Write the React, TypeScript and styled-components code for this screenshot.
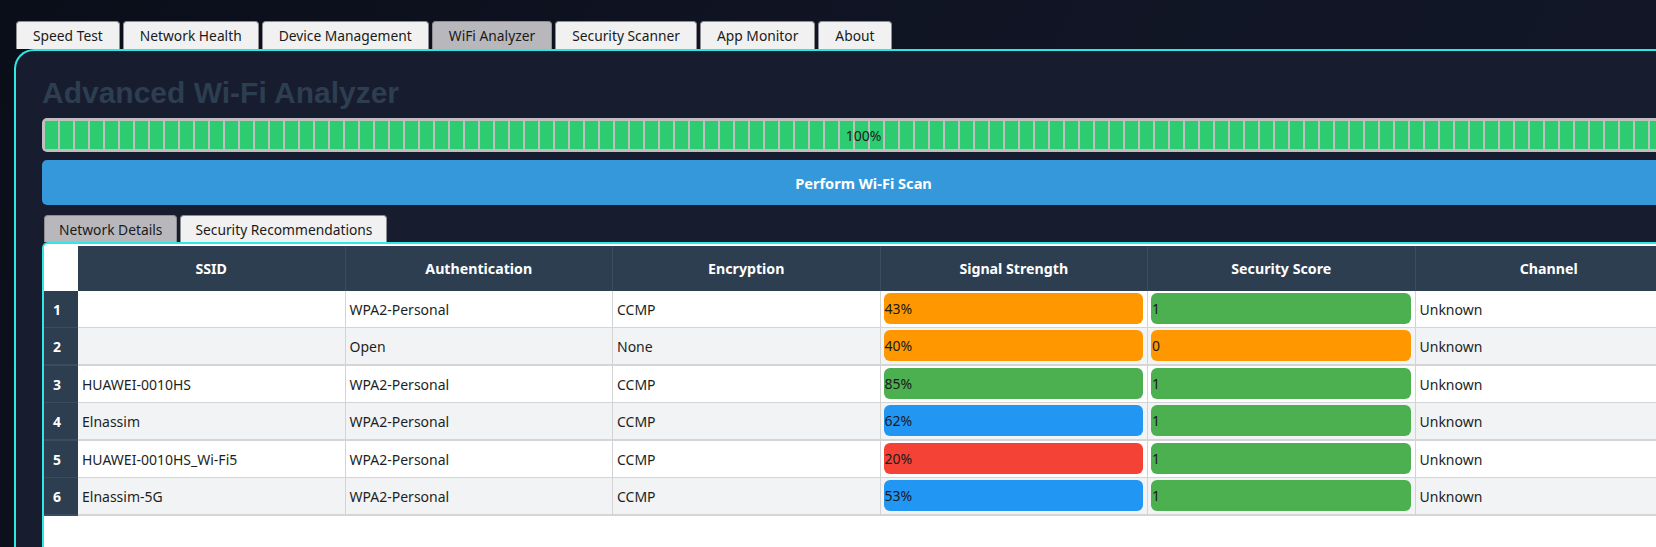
import React from "react";
import styled, { createGlobalStyle } from "styled-components";

const GlobalStyle = createGlobalStyle`
  html, body {
    margin: 0;
    padding: 0;
    overflow: hidden;
    height: 100%;
  }
  body {
    background: linear-gradient(120deg, #0a0e19 0%, #10152446 40%, #131829 100%), #0f1322;
    font-family: "Noto Sans", "Open Sans", sans-serif;
    font-size: 14px;
    color: #1c1f24;
  }
  #root { min-height: 100%; }
`;

const Page = styled.div`
  padding: 21px 0 0 14px;
  width: 1720px;
`;

const TabBar = styled.div<{ $indent?: number }>`
  display: flex;
  gap: 3px;
  margin-left: ${(p) => p.$indent ?? 0}px;
`;

const Tab = styled.div<{ $active?: boolean; $h?: number; $pad?: number }>`
  box-sizing: border-box;
  height: ${(p) => p.$h ?? 28}px;
  padding: 0 ${(p) => p.$pad ?? 16}px;
  display: flex;
  align-items: center;
  background: ${(p) => (p.$active ? "#b8b8bc" : "#f1f1f1")};
  border: 1px solid #8d8d92;
  border-bottom: none;
  border-radius: 4px 4px 0 0;
  color: #1a1a1a;
  font-size: 13.8px;
  white-space: nowrap;
`;

const Panel = styled.div`
  box-sizing: border-box;
  width: 1699px;
  min-height: 560px;
  border: 2px solid #2fe8e3;
  border-right: none;
  border-bottom: none;
  border-radius: 20px 0 0 0;
  background: #171c2f;
  padding: 25px 0 0 26px;
  display: flex;
  flex-direction: column;
`;

const Title = styled.h1`
  margin: 0;
  font-family: "Liberation Sans", Arial, sans-serif;
  font-weight: bold;
  font-size: 30px;
  line-height: 34px;
  color: #2c3e50;
`;

const Bar = styled.div`
  position: relative;
  box-sizing: border-box;
  margin-top: 8px;
  width: 1643px;
  height: 34px;
  padding: 3px;
  background: #bfbfc1;
  border-radius: 5px;
`;

const Fill = styled.div`
  height: 100%;
  background: repeating-linear-gradient(
    to right,
    #2ecc71 0px,
    #2ecc71 13px,
    transparent 13px,
    transparent 15px
  );
`;

const BarLabel = styled.span`
  position: absolute;
  inset: 0;
  display: flex;
  align-items: center;
  justify-content: center;
  font-size: 14px;
  color: #1d1d1d;
`;

const ScanButton = styled.button`
  margin-top: 8px;
  width: 1643px;
  height: 45px;
  border: none;
  border-radius: 5px;
  background: #3498db;
  color: #ffffff;
  font-family: "Noto Sans", "Open Sans", sans-serif;
  font-weight: bold;
  font-size: 14.6px;
`;

const SubTabs = styled(TabBar)`
  margin-top: 10px;
`;

const Frame = styled.div`
  box-sizing: border-box;
  width: 1643px;
  min-height: 320px;
  border: 2px solid #2fe8e3;
  border-radius: 6px;
  background: #ffffff;
  padding-top: 2px;
`;

const Grid = styled.div`
  display: grid;
  grid-template-columns: 34px repeat(6, 267.5px);
`;

const Corner = styled.div`
  background: #ffffff;
`;

const HeadCell = styled.div`
  box-sizing: border-box;
  height: 45px;
  background: #2c3e50;
  border-right: 1px solid #3b4d61;
  color: #ffffff;
  font-weight: bold;
  font-size: 14.2px;
  display: flex;
  align-items: center;
  justify-content: center;
`;

const RowHead = styled.div<{ $even: boolean }>`
  box-sizing: border-box;
  height: ${(p) => (p.$even ? 38 : 37)}px;
  background: #2c3e50;
  border-bottom: ${(p) => (p.$even ? 2 : 1)}px solid #3a4c60;
  color: #ffffff;
  font-weight: bold;
  font-size: 14px;
  padding-left: 9px;
  display: flex;
  align-items: center;
`;

const Cell = styled.div<{ $even: boolean }>`
  box-sizing: border-box;
  height: ${(p) => (p.$even ? 38 : 37)}px;
  background: ${(p) => (p.$even ? "#f2f3f4" : "#ffffff")};
  border-bottom: ${(p) => (p.$even ? 2 : 1)}px solid #d5d5d5;
  border-right: 1px solid #d3d3d3;
  padding: 0 4px;
  display: flex;
  align-items: center;
  font-size: 14px;
  color: #1c1f24;
  white-space: nowrap;
`;

const PillCell = styled(Cell)`
  padding: 2px 4px 3px 3px;
  align-items: stretch;
`;

const Pill = styled.div<{ $color: string }>`
  flex: 1;
  background: ${(p) => p.$color};
  border-radius: 6px;
  display: flex;
  align-items: center;
  padding-left: 1px;
  color: #1a1a1a;
`;

const COLORS = {
  orange: "#ff9800",
  green: "#4caf50",
  blue: "#2196f3",
  red: "#f44336",
};

type Net = {
  ssid: string;
  auth: string;
  enc: string;
  signal: number;
  signalColor: keyof typeof COLORS;
  score: number;
  scoreColor: keyof typeof COLORS;
  channel: string;
};

const networks: Net[] = [
  { ssid: "", auth: "WPA2-Personal", enc: "CCMP", signal: 43, signalColor: "orange", score: 1, scoreColor: "green", channel: "Unknown" },
  { ssid: "", auth: "Open", enc: "None", signal: 40, signalColor: "orange", score: 0, scoreColor: "orange", channel: "Unknown" },
  { ssid: "HUAWEI-0010HS", auth: "WPA2-Personal", enc: "CCMP", signal: 85, signalColor: "green", score: 1, scoreColor: "green", channel: "Unknown" },
  { ssid: "Elnassim", auth: "WPA2-Personal", enc: "CCMP", signal: 62, signalColor: "blue", score: 1, scoreColor: "green", channel: "Unknown" },
  { ssid: "HUAWEI-0010HS_Wi-Fi5", auth: "WPA2-Personal", enc: "CCMP", signal: 20, signalColor: "red", score: 1, scoreColor: "green", channel: "Unknown" },
  { ssid: "Elnassim-5G", auth: "WPA2-Personal", enc: "CCMP", signal: 53, signalColor: "blue", score: 1, scoreColor: "green", channel: "Unknown" },
];

const mainTabs = [
  "Speed Test",
  "Network Health",
  "Device Management",
  "WiFi Analyzer",
  "Security Scanner",
  "App Monitor",
  "About",
];

const headers = ["SSID", "Authentication", "Encryption", "Signal Strength", "Security Score", "Channel"];

export default function App() {
  const progress = 100;
  return (
    <>
      <GlobalStyle />
      <Page>
        <TabBar $indent={2}>
          {mainTabs.map((t) => (
            <Tab key={t} $active={t === "WiFi Analyzer"}>
              {t}
            </Tab>
          ))}
        </TabBar>
        <Panel>
          <Title>Advanced Wi-Fi Analyzer</Title>
          <Bar>
            <Fill style={{ width: `${progress}%` }} />
            <BarLabel>{progress}%</BarLabel>
          </Bar>
          <ScanButton>Perform Wi-Fi Scan</ScanButton>
          <SubTabs $indent={2}>
            <Tab $active $h={27} $pad={14}>
              Network Details
            </Tab>
            <Tab $h={27} $pad={14}>
              Security Recommendations
            </Tab>
          </SubTabs>
          <Frame>
            <Grid>
              <Corner />
              {headers.map((h) => (
                <HeadCell key={h}>{h}</HeadCell>
              ))}
              {networks.map((n, i) => {
                const even = i % 2 === 1;
                return (
                  <React.Fragment key={i}>
                    <RowHead $even={even}>{i + 1}</RowHead>
                    <Cell $even={even}>{n.ssid}</Cell>
                    <Cell $even={even}>{n.auth}</Cell>
                    <Cell $even={even}>{n.enc}</Cell>
                    <PillCell $even={even}>
                      <Pill $color={COLORS[n.signalColor]}>{n.signal}%</Pill>
                    </PillCell>
                    <PillCell $even={even}>
                      <Pill $color={COLORS[n.scoreColor]}>{n.score}</Pill>
                    </PillCell>
                    <Cell $even={even}>{n.channel}</Cell>
                  </React.Fragment>
                );
              })}
            </Grid>
          </Frame>
        </Panel>
      </Page>
    </>
  );
}
